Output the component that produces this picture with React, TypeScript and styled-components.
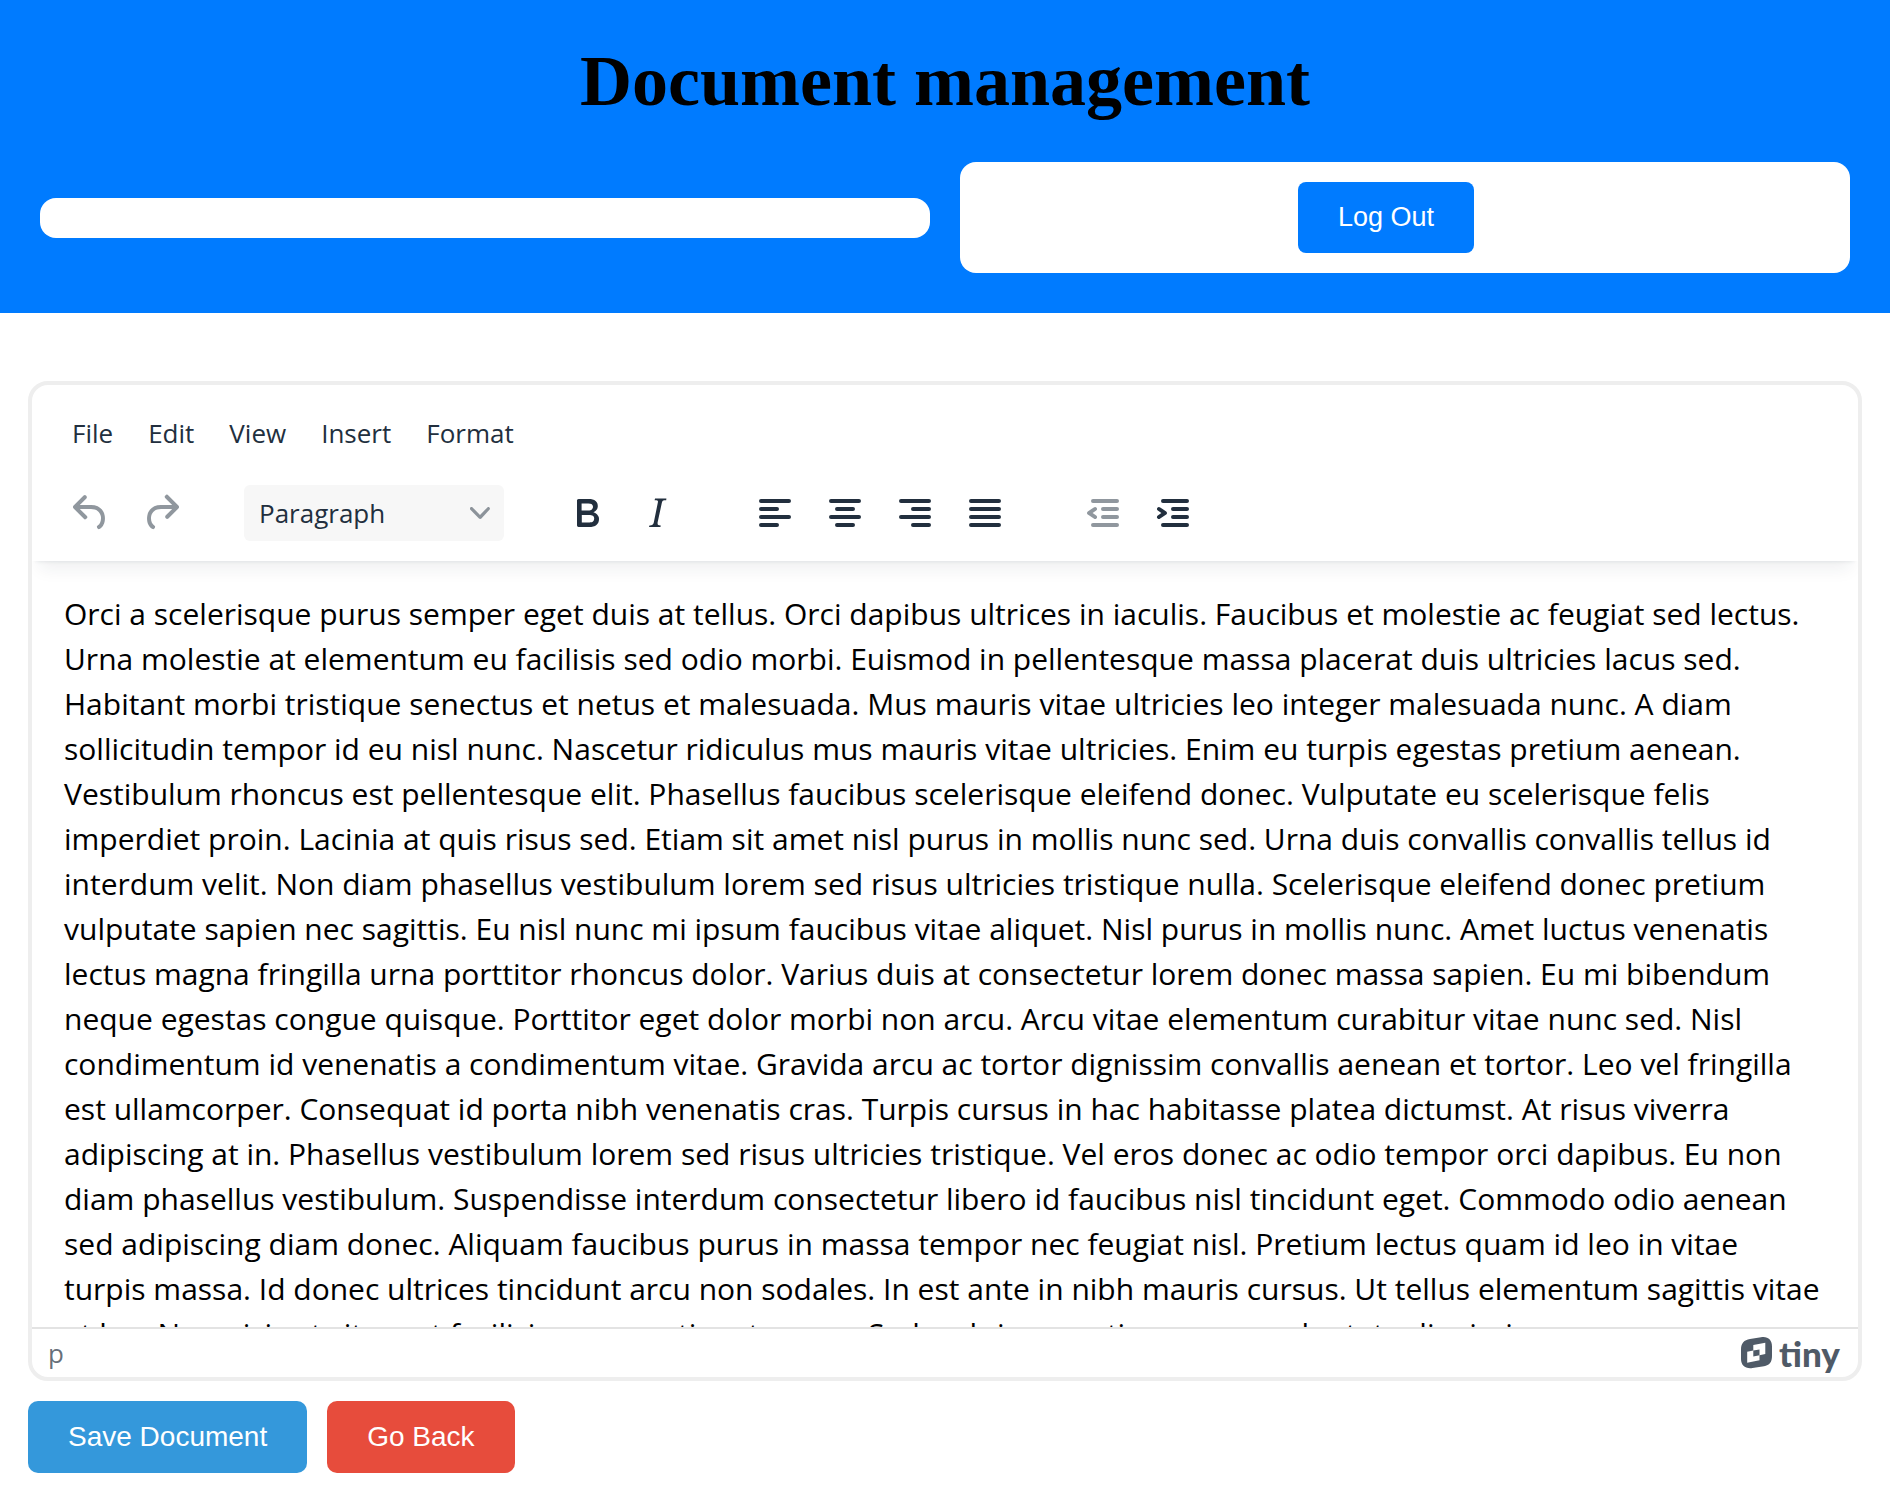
import React from "react";
import styled, { createGlobalStyle } from "styled-components";

const uiFont = `"Segoe UI", "Open Sans", "Noto Sans", sans-serif`;
const buttonFont = `Arial, "Liberation Sans", sans-serif`;
const ink = "#222f3e";

const GlobalStyle = createGlobalStyle`
  *, *::before, *::after { box-sizing: border-box; }
  body { margin: 0; background: #fff; color: #000; }
`;

const Banner = styled.header`
  background: #007bff;
  padding: 40px;
`;

const Title = styled.h1`
  margin: 0 0 40px;
  font: bold 72px/82px "Times New Roman", "Liberation Serif", serif;
  text-align: center;
`;

const Cards = styled.div`
  display: grid;
  grid-template-columns: 1fr 1fr;
  gap: 30px;
  align-items: center;
`;

const Card = styled.div`
  display: flex;
  justify-content: center;
  padding: 20px;
  border-radius: 16px;
  background: #fff;
`;

const LogOutButton = styled.button`
  margin-right: 38px;
  padding: 20px 40px;
  border: 0;
  border-radius: 8px;
  background: #007bff;
  color: #fff;
  font: 27px/31px ${buttonFont};
  cursor: pointer;
`;

const Main = styled.main`
  padding: 68px 28px 24px;
`;

const Editor = styled.section`
  display: flex;
  flex-direction: column;
  height: 1000px;
  overflow: hidden;
  border: 4px solid #eee;
  border-radius: 20px;
  background: #fff;
  font-family: ${uiFont};
`;

const EditorHeader = styled.div`
  position: relative;
  padding: 20px 24px;
  box-shadow: 0 4px 4px -4px rgba(34, 47, 62, 0.12), 0 16px 16px -8px rgba(34, 47, 62, 0.07);
`;

const MenuBar = styled.div`
  display: flex;
  gap: 3px;
  margin-bottom: 24px;
`;

const MenuButton = styled.button`
  padding: 0 16px;
  border: 0;
  background: none;
  color: ${ink};
  font: 26px/56px ${uiFont};
`;

const ToolBar = styled.div`
  display: flex;
  align-items: center;
  gap: 48px;
`;

const ToolGroup = styled.div`
  display: flex;
`;

const ToolButton = styled.button`
  display: grid;
  place-items: center;
  width: 70px;
  height: 56px;
  padding: 0;
  border: 0;
  background: none;
  color: ${ink};

  &:disabled {
    color: rgba(34, 47, 62, 0.5);
  }
`;

const BlockFormat = styled.label`
  display: grid;
  grid-template-columns: 1fr 20px;
  align-items: center;
  width: 260px;
  padding-right: 14px;
  border-radius: 6px;
  background: #f7f7f7;
  color: rgba(34, 47, 62, 0.5);
`;

const FormatSelect = styled.select`
  grid-area: 1 / 1 / 2 / 3;
  appearance: none;
  height: 56px;
  padding: 0 15px;
  border: 0;
  background: none;
  color: ${ink};
  font: 26px/56px ${uiFont};
`;

const Chevron = styled.svg`
  grid-area: 1 / 2;
  pointer-events: none;
`;

const Content = styled.div`
  flex: 1;
  min-height: 0;
  overflow: hidden;
  padding: 30px 28px 0 32px;
  font-size: 30px;
  line-height: 45px;
  outline: 0;
`;

const Paragraph = styled.p`
  margin: 0;
  white-space: nowrap;
`;

const StatusBar = styled.footer`
  display: flex;
  align-items: center;
  justify-content: space-between;
  height: 50px;
  padding: 0 18px 0 16px;
  border-top: 2px solid #e3e3e3;
  color: rgba(34, 47, 62, 0.7);
  font-size: 26px;
`;

const Brand = styled.a`
  display: flex;
  align-items: center;
  gap: 6px;
  color: #4f5a67;
  font: 900 35px/40px Lato, sans-serif;
  text-decoration: none;
`;

const Actions = styled.div`
  display: flex;
  gap: 20px;
  margin-top: 20px;
`;

const ActionButton = styled.button<{ $color: string }>`
  padding: 20px 40px;
  border: 0;
  border-radius: 10px;
  background: ${(p) => p.$color};
  color: #fff;
  font: 28px/32px ${buttonFont};
  cursor: pointer;
`;

const icons = {
  undo: "M6.4 8H12c3.7 0 6.2 2 6.8 5.1.6 2.7-.4 5.6-2.3 6.8a1 1 0 0 1-1-1.8c1.1-.6 1.8-2.7 1.4-4.6-.5-2.1-2.1-3.5-4.9-3.5H6.4l3.3 3.3a1 1 0 1 1-1.4 1.4l-5-5a1 1 0 0 1 0-1.4l5-5a1 1 0 0 1 1.4 1.4z",
  redo: "M17.6 10H12c-2.8 0-4.4 1.4-4.9 3.5-.4 2 .3 4 1.4 4.6a1 1 0 1 1-1 1.8c-2-1.2-2.9-4.1-2.3-6.8.6-3 3-5.1 6.8-5.1h5.6l-3.3-3.3a1 1 0 1 1 1.4-1.4l5 5a1 1 0 0 1 0 1.4l-5 5a1 1 0 0 1-1.4-1.4z",
  bold: "M7.8 19c-.3 0-.5 0-.6-.2l-.2-.5V5.7c0-.2 0-.4.2-.5l.6-.2h5c1.5 0 2.7.3 3.5 1 .7.6 1.1 1.4 1.1 2.5a3 3 0 0 1-.6 1.9c-.4.6-1 1-1.6 1.2.4.1.9.3 1.3.6s.8.7 1 1.2c.4.4.5 1 .5 1.6 0 1.3-.4 2.3-1.3 3-.8.7-2.1 1-3.8 1zm5-8.3c.6 0 1.2-.1 1.6-.5.4-.3.6-.7.6-1.3 0-1.1-.8-1.7-2.3-1.7H9.3v3.5zm.5 6c.7 0 1.3-.1 1.7-.4.4-.4.6-.9.6-1.5s-.2-1-.7-1.4c-.4-.3-1-.4-2-.4H9.4v3.8z",
  italic: "m16.7 4.7-.1.9h-.3c-.6 0-1 0-1.4.3-.3.3-.4.6-.5 1.1l-2.1 9.8v.6c0 .5.4.8 1.4.8h.2l-.2.8H8l.2-.8h.2c1.1 0 1.8-.5 2-1.5l2-9.8.1-.5c0-.6-.4-.8-1.4-.8h-.3l.2-.9z",
  alignLeft: "M5 5h14a1 1 0 0 1 0 2H5a1 1 0 1 1 0-2m0 4h8a1 1 0 0 1 0 2H5a1 1 0 1 1 0-2m0 8h8a1 1 0 0 1 0 2H5a1 1 0 0 1 0-2m0-4h14a1 1 0 0 1 0 2H5a1 1 0 0 1 0-2",
  alignCenter: "M5 5h14a1 1 0 0 1 0 2H5a1 1 0 1 1 0-2m3 4h8a1 1 0 0 1 0 2H8a1 1 0 1 1 0-2m0 8h8a1 1 0 0 1 0 2H8a1 1 0 0 1 0-2m-3-4h14a1 1 0 0 1 0 2H5a1 1 0 0 1 0-2",
  alignRight: "M5 5h14a1 1 0 0 1 0 2H5a1 1 0 1 1 0-2m6 4h8a1 1 0 0 1 0 2h-8a1 1 0 0 1 0-2m0 8h8a1 1 0 0 1 0 2h-8a1 1 0 0 1 0-2m-6-4h14a1 1 0 0 1 0 2H5a1 1 0 0 1 0-2",
  justify: "M5 5h14a1 1 0 0 1 0 2H5a1 1 0 1 1 0-2m0 4h14a1 1 0 0 1 0 2H5a1 1 0 1 1 0-2m0 4h14a1 1 0 0 1 0 2H5a1 1 0 0 1 0-2m0 4h14a1 1 0 0 1 0 2H5a1 1 0 0 1 0-2",
  outdent: "M7 5h12a1 1 0 0 1 0 2H7a1 1 0 1 1 0-2m5 4h7a1 1 0 0 1 0 2h-7a1 1 0 0 1 0-2m0 4h7a1 1 0 0 1 0 2h-7a1 1 0 0 1 0-2m-5 4h12a1 1 0 0 1 0 2H7a1 1 0 0 1 0-2m1.6-3.8a1 1 0 0 1-1.2 1.6l-3-2a1 1 0 0 1 0-1.6l3-2a1 1 0 0 1 1.2 1.6L6.8 12z",
  indent: "M7 5h12a1 1 0 0 1 0 2H7a1 1 0 1 1 0-2m5 4h7a1 1 0 0 1 0 2h-7a1 1 0 0 1 0-2m0 4h7a1 1 0 0 1 0 2h-7a1 1 0 0 1 0-2m-5 4h12a1 1 0 0 1 0 2H7a1 1 0 0 1 0-2m-2.6-3.8L6.2 12l-1.8-1.2a1 1 0 0 1 1.2-1.6l3 2a1 1 0 0 1 0 1.6l-3 2a1 1 0 1 1-1.2-1.6",
};

type IconName = keyof typeof icons;

function Tool({ icon, label, disabled }: { icon: IconName; label: string; disabled?: boolean }) {
  return (
    <ToolButton type="button" aria-label={label} disabled={disabled}>
      <svg width="48" height="48" viewBox="0 0 24 24" fill="currentColor" fillRule="evenodd" aria-hidden="true">
        <path d={icons[icon]} />
      </svg>
    </ToolButton>
  );
}

const menus = ["File", "Edit", "View", "Insert", "Format"];

const lines = [
  "Orci a scelerisque purus semper eget duis at tellus. Orci dapibus ultrices in iaculis. Faucibus et molestie ac feugiat sed lectus.",
  "Urna molestie at elementum eu facilisis sed odio morbi. Euismod in pellentesque massa placerat duis ultricies lacus sed.",
  "Habitant morbi tristique senectus et netus et malesuada. Mus mauris vitae ultricies leo integer malesuada nunc. A diam",
  "sollicitudin tempor id eu nisl nunc. Nascetur ridiculus mus mauris vitae ultricies. Enim eu turpis egestas pretium aenean.",
  "Vestibulum rhoncus est pellentesque elit. Phasellus faucibus scelerisque eleifend donec. Vulputate eu scelerisque felis",
  "imperdiet proin. Lacinia at quis risus sed. Etiam sit amet nisl purus in mollis nunc sed. Urna duis convallis convallis tellus id",
  "interdum velit. Non diam phasellus vestibulum lorem sed risus ultricies tristique nulla. Scelerisque eleifend donec pretium",
  "vulputate sapien nec sagittis. Eu nisl nunc mi ipsum faucibus vitae aliquet. Nisl purus in mollis nunc. Amet luctus venenatis",
  "lectus magna fringilla urna porttitor rhoncus dolor. Varius duis at consectetur lorem donec massa sapien. Eu mi bibendum",
  "neque egestas congue quisque. Porttitor eget dolor morbi non arcu. Arcu vitae elementum curabitur vitae nunc sed. Nisl",
  "condimentum id venenatis a condimentum vitae. Gravida arcu ac tortor dignissim convallis aenean et tortor. Leo vel fringilla",
  "est ullamcorper. Consequat id porta nibh venenatis cras. Turpis cursus in hac habitasse platea dictumst. At risus viverra",
  "adipiscing at in. Phasellus vestibulum lorem sed risus ultricies tristique. Vel eros donec ac odio tempor orci dapibus. Eu non",
  "diam phasellus vestibulum. Suspendisse interdum consectetur libero id faucibus nisl tincidunt eget. Commodo odio aenean",
  "sed adipiscing diam donec. Aliquam faucibus purus in massa tempor nec feugiat nisl. Pretium lectus quam id leo in vitae",
  "turpis massa. Id donec ultrices tincidunt arcu non sodales. In est ante in nibh mauris cursus. Ut tellus elementum sagittis vitae",
  "et leo. Non nisi est sit amet facilisis magna etiam tempor. Sed sed risus pretium quam vulputate dignissim.",
];

export default function App() {
  return (
    <>
      <GlobalStyle />
      <Banner>
        <Title>Document management</Title>
        <Cards>
          <Card />
          <Card>
            <LogOutButton type="button">Log Out</LogOutButton>
          </Card>
        </Cards>
      </Banner>
      <Main>
        <Editor aria-label="Document editor">
          <EditorHeader>
            <MenuBar role="menubar">
              {menus.map((menu) => (
                <MenuButton key={menu} type="button" role="menuitem">
                  {menu}
                </MenuButton>
              ))}
            </MenuBar>
            <ToolBar role="toolbar">
              <ToolGroup>
                <Tool icon="undo" label="Undo" disabled />
                <Tool icon="redo" label="Redo" disabled />
              </ToolGroup>
              <BlockFormat>
                <FormatSelect aria-label="Block format" defaultValue="Paragraph">
                  <option>Paragraph</option>
                </FormatSelect>
                <Chevron width="20" height="20" viewBox="0 0 10 10" fill="currentColor" aria-hidden="true">
                  <path d="M8.7 2.2c.3-.3.8-.3 1 0 .4.4.4.9 0 1.2L5.7 7.8c-.3.3-.9.3-1.2 0L.2 3.4a.8.8 0 0 1 0-1.2c.3-.3.8-.3 1.1 0L5 6z" />
                </Chevron>
              </BlockFormat>
              <ToolGroup>
                <Tool icon="bold" label="Bold" />
                <Tool icon="italic" label="Italic" />
              </ToolGroup>
              <ToolGroup>
                <Tool icon="alignLeft" label="Align left" />
                <Tool icon="alignCenter" label="Align center" />
                <Tool icon="alignRight" label="Align right" />
                <Tool icon="justify" label="Justify" />
              </ToolGroup>
              <ToolGroup>
                <Tool icon="outdent" label="Decrease indent" disabled />
                <Tool icon="indent" label="Increase indent" />
              </ToolGroup>
            </ToolBar>
          </EditorHeader>
          <Content contentEditable suppressContentEditableWarning role="textbox" aria-label="Document text" spellCheck={false}>
            <Paragraph>
              {lines.map((line) => (
                <React.Fragment key={line}>
                  {line}
                  <br />
                </React.Fragment>
              ))}
            </Paragraph>
          </Content>
          <StatusBar>
            <span>p</span>
            <Brand href="#tiny">
              <svg width="32" height="32" viewBox="0 0 32 32" aria-hidden="true">
                <path
                  fill="currentColor"
                  fillRule="evenodd"
                  d="M9 2L20 .3C27-.8 31 3 31 9.500V19C31 25 28.500 28.300 23 29.200L11.500 31C4.500 32 0 28.500 0 22V12C0 6.500 3 2.900 9 2ZM12.300 8V13.600L6.200 14.800V25.700L18.500 23.300V18.200L24.300 17V5.700ZM12.300 13.600L18.500 12.400V18.200L12.300 19.400Z"
                />
              </svg>
              tiny
            </Brand>
          </StatusBar>
        </Editor>
        <Actions>
          <ActionButton type="button" $color="#3498db">Save Document</ActionButton>
          <ActionButton type="button" $color="#e74c3c">Go Back</ActionButton>
        </Actions>
      </Main>
    </>
  );
}
